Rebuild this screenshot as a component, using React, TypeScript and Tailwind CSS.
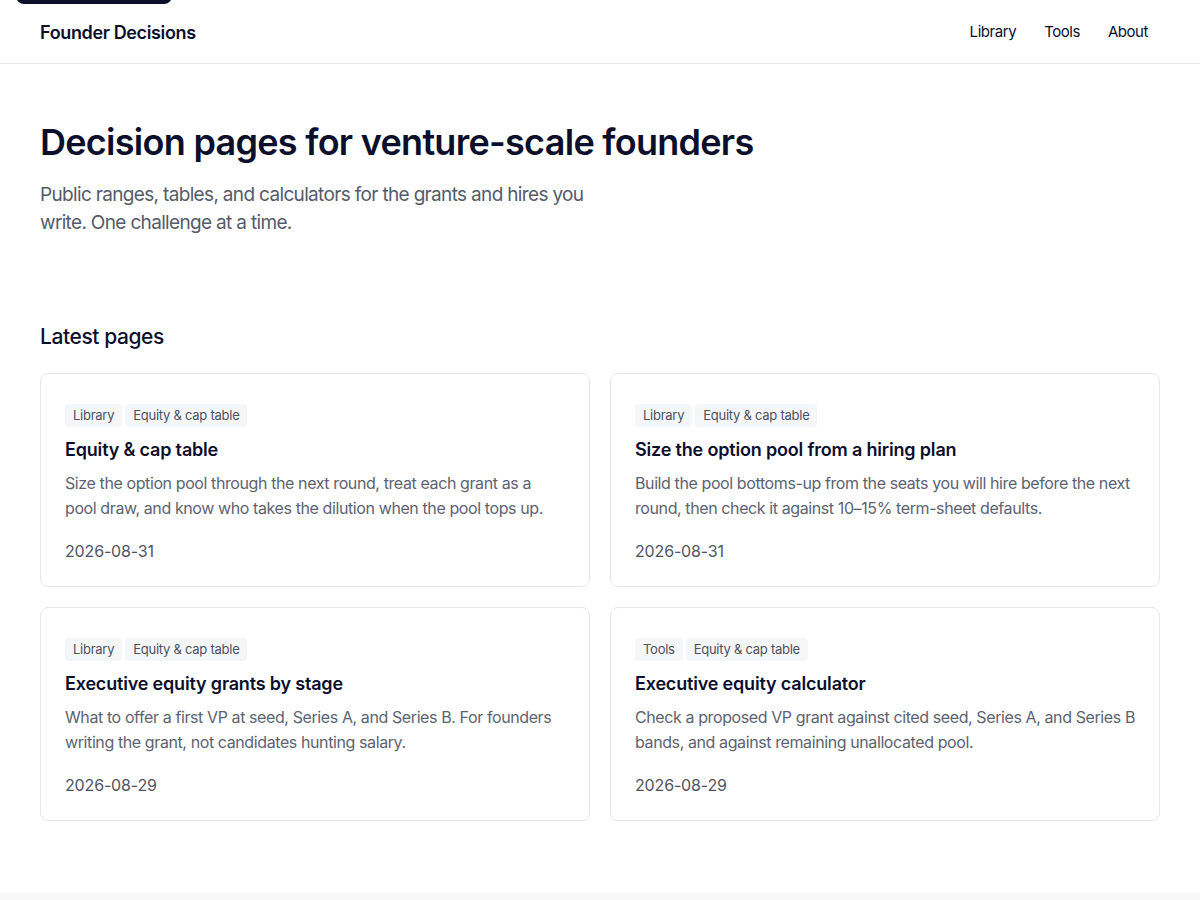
const cards = [
  {
    tags: ['Library', 'Equity & cap table'],
    title: 'Equity & cap table',
    desc: 'Size the option pool through the next round, treat each grant as a pool draw, and know who takes the dilution when the pool tops up.',
    date: '2026-08-31',
  },
  {
    tags: ['Library', 'Equity & cap table'],
    title: 'Size the option pool from a hiring plan',
    desc: 'Build the pool bottoms-up from the seats you will hire before the next round, then check it against 10–15% term-sheet defaults.',
    date: '2026-08-31',
  },
  {
    tags: ['Library', 'Equity & cap table'],
    title: 'Executive equity grants by stage',
    desc: 'What to offer a first VP at seed, Series A, and Series B. For founders writing the grant, not candidates hunting salary.',
    date: '2026-08-29',
  },
  {
    tags: ['Tools', 'Equity & cap table'],
    title: 'Executive equity calculator',
    desc: 'Check a proposed VP grant against cited seed, Series A, and Series B bands, and against remaining unallocated pool.',
    date: '2026-08-29',
  },
];

function Card({ tags, title, desc, date }: (typeof cards)[number]) {
  return (
    <a className="block rounded-lg border border-[#e6e7eb] bg-white px-6 pt-[30px] pb-[24px]">
      <div className="flex gap-[3px]">
        {tags.map((t) => (
          <span key={t} className="rounded bg-[#f5f6f8] px-2 text-[13px] leading-[23px] tracking-[-0.02em] text-[#4d5260]">
            {t}
          </span>
        ))}
      </div>
      <h3 className="mt-[10px] text-[18px] font-semibold leading-[26px] tracking-[-0.01em] text-[#0b0f2c]">{title}</h3>
      <p className="mt-[8px] text-[16px] leading-[25px] tracking-[-0.025em] text-[#5d6372]">{desc}</p>
      <div className="mt-[19px] text-[16px] leading-[22px] tracking-[-0.01em] text-[#4f5463]">{date}</div>
    </a>
  );
}

export default function App() {
  return (
    <div className="relative min-h-screen bg-white text-[#0b0f2c]" style={{ fontFamily: 'Inter, "Noto Sans", sans-serif' }}>
      {/* skip link, mostly off-screen */}
      <a className="absolute left-4 top-[-36px] h-10 w-[156px] rounded-lg bg-[#0b0f2c]" />

      <header className="flex h-16 items-center justify-between border-b border-[#e8e9ec] px-10">
        <div className="pt-px text-[18px] font-semibold tracking-[-0.02em]">Founder Decisions</div>
        <nav className="flex gap-1 pt-px text-[15px] tracking-[-0.03em]">
          <a className="px-3 py-1">Library</a>
          <a className="px-3 py-1">Tools</a>
          <a className="px-3 py-1">About</a>
        </nav>
      </header>

      <main className="mx-auto max-w-[1200px] px-10">
        <section className="pt-[56px] pb-[85px]">
          <h1 className="text-[36px] font-semibold leading-[44px] tracking-[-0.02em]">
            Decision pages for venture-scale founders
          </h1>
          <p className="mt-[17px] max-w-[560px] text-[19px] leading-[28px] tracking-[-0.035em] text-[#555b69]">
            Public ranges, tables, and calculators for the grants and hires you write. One challenge at a time.
          </p>
        </section>

        <section className="pb-[72px]">
          <h2 className="text-[21px] font-medium leading-[30px] tracking-[-0.02em]">Latest pages</h2>
          <div className="mt-[21px] grid grid-cols-2 gap-5">
            {cards.map((c) => (
              <Card key={c.title} {...c} />
            ))}
          </div>
        </section>
      </main>

      <footer className="h-[120px] bg-[#f8f8f9]" />
    </div>
  );
}
